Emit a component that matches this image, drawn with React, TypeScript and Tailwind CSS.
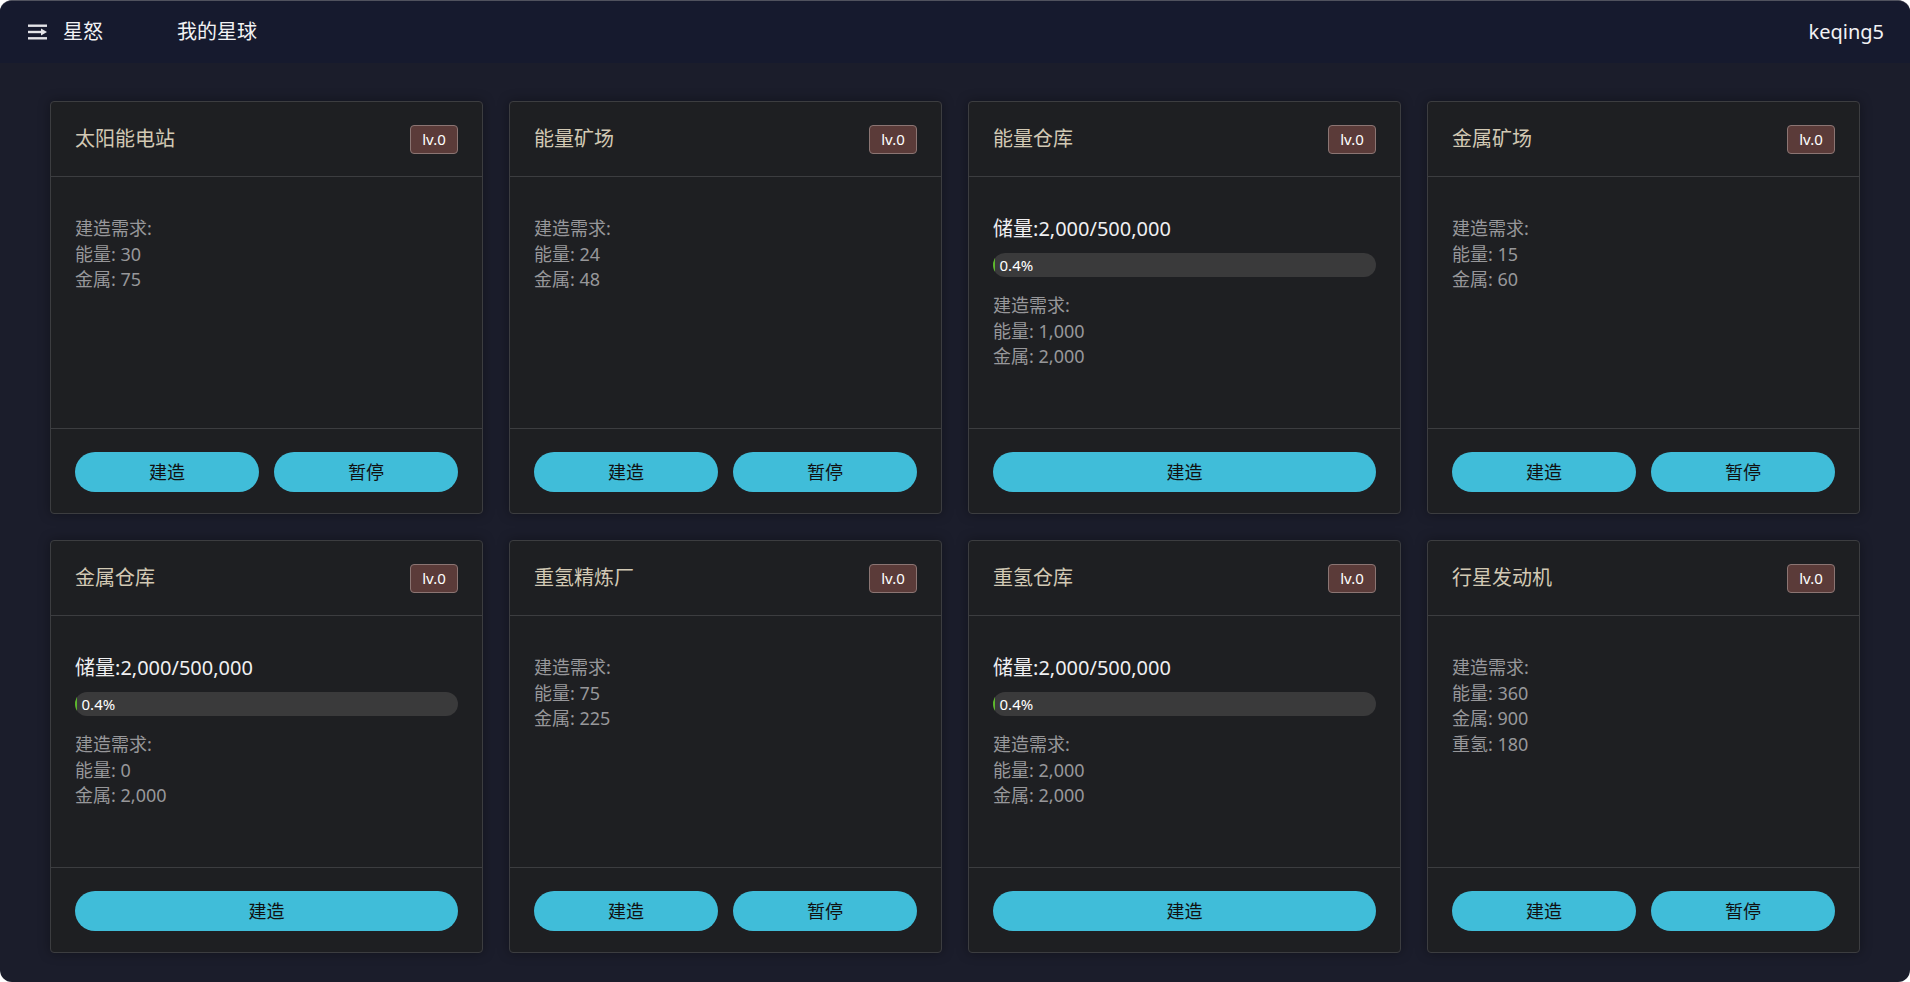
import React from 'react';

type Building = {
  name: string;
  storage?: string;
  percent?: number;
  needs: [string, string][];
  pause: boolean;
};

const buildings: Building[] = [
  { name: '太阳能电站', needs: [['能量', '30'], ['金属', '75']], pause: true },
  { name: '能量矿场', needs: [['能量', '24'], ['金属', '48']], pause: true },
  { name: '能量仓库', storage: '2,000/500,000', percent: 0.4, needs: [['能量', '1,000'], ['金属', '2,000']], pause: false },
  { name: '金属矿场', needs: [['能量', '15'], ['金属', '60']], pause: true },
  { name: '金属仓库', storage: '2,000/500,000', percent: 0.4, needs: [['能量', '0'], ['金属', '2,000']], pause: false },
  { name: '重氢精炼厂', needs: [['能量', '75'], ['金属', '225']], pause: true },
  { name: '重氢仓库', storage: '2,000/500,000', percent: 0.4, needs: [['能量', '2,000'], ['金属', '2,000']], pause: false },
  { name: '行星发动机', needs: [['能量', '360'], ['金属', '900'], ['重氢', '180']], pause: true },
];

function MenuIcon() {
  return (
    <svg width="20" height="16" viewBox="0 0 20 16" className="text-[#e4e4e8]">
      <rect x="0" y="0.5" width="19" height="2.4" fill="currentColor" />
      <rect x="0" y="6.8" width="13" height="2.4" fill="currentColor" />
      <polygon points="13,4.5 19,8 13,11.5" fill="currentColor" />
      <rect x="0" y="13.1" width="19" height="2.4" fill="currentColor" />
    </svg>
  );
}

function Card({ b }: { b: Building }) {
  return (
    <div className="h-[413px] flex flex-col bg-[#1e1f22] border border-[#3c3d40] rounded-[4px] shadow-[0_0_12px_rgba(0,0,0,0.35)]">
      <div className="h-[75px] shrink-0 flex items-center justify-between px-[24px] border-b border-[#3c3d40]">
        <span className="text-[20px] text-[#d2c9b4]">{b.name}</span>
        <span className="h-[29px] w-[48px] flex items-center justify-center rounded-[4px] bg-[#5b3b39] border border-[#8b7573] text-[15px] text-white">
          lv.0
        </span>
      </div>
      <div className="flex-1 px-[24px] pt-[39px] text-[18px] leading-[25.7px]">
        {b.storage && (
          <>
            <div className="text-[#f0f0f2] text-[20px] leading-[26px]">储量:{b.storage}</div>
            <div className="mt-[11px] mb-[16px] h-[24px] rounded-full bg-[#3a3a3b] flex items-center overflow-hidden">
              <div className="h-full bg-[#5cb82c] rounded-l-full" style={{ width: `${b.percent}%` }} />
              <span className="ml-[5px] text-[15px] text-white leading-none">{b.percent}%</span>
            </div>
          </>
        )}
        <div className="text-[#97979a]">建造需求:</div>
        {b.needs.map(([k, v]) => (
          <div key={k} className="text-[#97979a]">
            {k}: {v}
          </div>
        ))}
      </div>
      <div className="h-[85px] shrink-0 border-t border-[#3c3d40] px-[24px] pt-[23px] flex gap-[15px]">
        <button className="flex-1 h-[40px] rounded-full bg-[#40bdd9] text-[#111] text-[18px]">建造</button>
        {b.pause && (
          <button className="flex-1 h-[40px] rounded-full bg-[#40bdd9] text-[#111] text-[18px]">暂停</button>
        )}
      </div>
    </div>
  );
}

export default function App() {
  return (
    <div
      className="bg-white w-[1910px] h-[982px] overflow-hidden"
      style={{ fontFamily: '"Noto Sans", "Noto Sans CJK SC", sans-serif' }}
    >
      <div className="h-full rounded-[12px] overflow-hidden bg-[#1b1d2b] border-t border-[#50525e] flex flex-col">
        <header className="h-[62px] shrink-0 bg-[#161a2e] flex items-center pl-[28px] pr-[26px] text-[20px] text-[#f2f2f4]">
          <MenuIcon />
          <span className="ml-[15px]">星怒</span>
          <span className="ml-[74px]">我的星球</span>
          <span className="ml-auto">keqing5</span>
        </header>
        <main className="flex-1 px-[50px] pt-[38px] grid grid-cols-4 gap-[26px] content-start">
          {buildings.map((b) => (
            <Card key={b.name} b={b} />
          ))}
        </main>
      </div>
    </div>
  );
}
